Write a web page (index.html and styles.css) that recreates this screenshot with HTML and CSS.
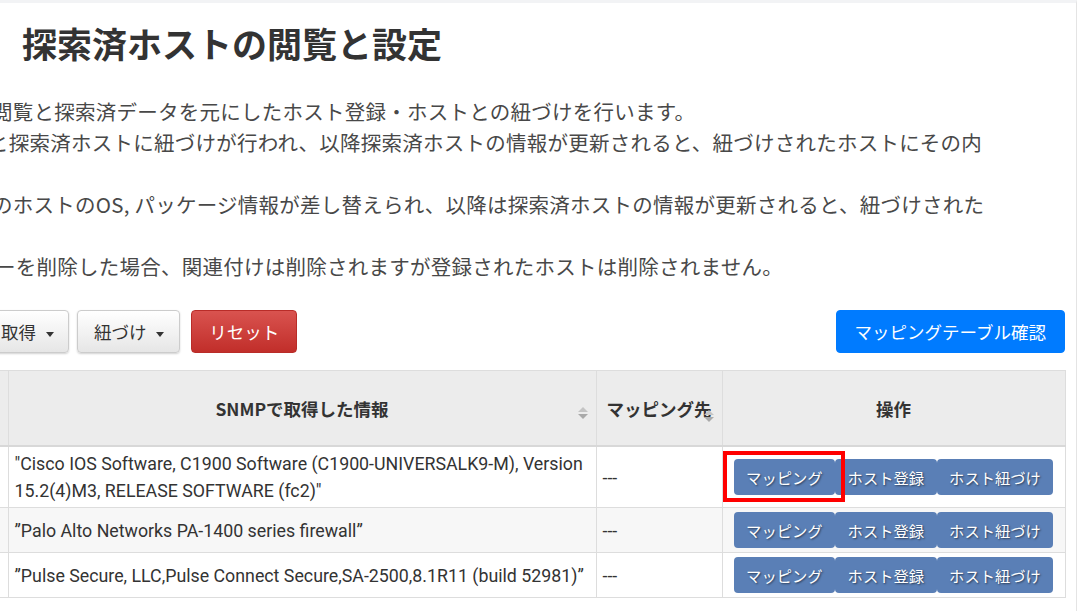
FILE: index.html
```html
<!DOCTYPE html>
<html lang="ja">
<head>
    <meta charset="UTF-8">
    <meta name="viewport" content="width=device-width, initial-scale=1.0">
    <title>探索済ホストの閲覧と設定</title>
    <link rel="stylesheet" href="styles.css">
</head>
<body>
    <div class="page">
        <h1 class="page-title">探索済ホストの閲覧と設定</h1>

        <div class="desc">
            <div class="desc-line shift-8">閲覧と探索済データを元にしたホスト登録・ホストとの紐づけを行います。</div>
            <div class="desc-line shift-12">と探索済ホストに紐づけが行われ、以降探索済ホストの情報が更新されると、紐づけされたホストにその内</div>
            <div class="desc-line"></div>
            <div class="desc-line shift-8">のホストのOS, パッケージ情報が差し替えられ、以降は探索済ホストの情報が更新されると、紐づけされた</div>
            <div class="desc-line"></div>
            <div class="desc-line shift-5">ーを削除した場合、関連付けは削除されますが登録されたホストは削除されません。</div>
        </div>

        <div class="toolbar">
            <button type="button" class="btn btn-default btn-first">取得 <span class="caret"></span></button>
            <button type="button" class="btn btn-default">紐づけ <span class="caret"></span></button>
            <button type="button" class="btn btn-danger">リセット</button>
            <button type="button" class="btn btn-primary">マッピングテーブル確認</button>
        </div>

        <table class="hosts">
            <colgroup>
                <col class="col-hidden">
                <col class="col-info">
                <col class="col-map">
                <col class="col-ops">
            </colgroup>
            <thead>
                <tr>
                    <th class="cell-hidden"></th>
                    <th class="th-center sortable">SNMPで取得した情報<span class="sort-icon"></span></th>
                    <th class="th-left sortable">マッピング先<span class="sort-icon"></span></th>
                    <th class="th-center">操作</th>
                </tr>
            </thead>
            <tbody>
                <tr>
                    <td class="cell-hidden"></td>
                    <td>"Cisco IOS Software, C1900 Software (C1900-UNIVERSALK9-M), Version 15.2(4)M3, RELEASE SOFTWARE (fc2)"</td>
                    <td>---</td>
                    <td class="ops-cell">
                        <div class="ops">
                            <button type="button" class="op-btn">マッピング</button><button type="button" class="op-btn">ホスト登録</button><button type="button" class="op-btn">ホスト紐づけ</button>
                            <span class="highlight"></span>
                        </div>
                    </td>
                </tr>
                <tr>
                    <td class="cell-hidden"></td>
                    <td>”Palo Alto Networks PA-1400 series firewall”</td>
                    <td>---</td>
                    <td class="ops-cell">
                        <div class="ops">
                            <button type="button" class="op-btn">マッピング</button><button type="button" class="op-btn">ホスト登録</button><button type="button" class="op-btn">ホスト紐づけ</button>
                        </div>
                    </td>
                </tr>
                <tr>
                    <td class="cell-hidden"></td>
                    <td>”Pulse Secure, LLC,Pulse Connect Secure,SA-2500,8.1R11 (build 52981)”</td>
                    <td>---</td>
                    <td class="ops-cell">
                        <div class="ops">
                            <button type="button" class="op-btn">マッピング</button><button type="button" class="op-btn">ホスト登録</button><button type="button" class="op-btn">ホスト紐づけ</button>
                        </div>
                    </td>
                </tr>
            </tbody>
        </table>
    </div>
</body>
</html>
```

FILE: styles.css
```css
body {
    margin: 0;
    background: #fff;
    font-family: "Noto Sans CJK JP", "Noto Sans", sans-serif;
    color: #333;
}
.page {
    height: 608px;
    overflow: hidden;
    border-top: 3px solid #f2f3f5;
    border-right: 1px solid #e4e4e4;
    padding-right: 11px;
}
.page-title {
    margin: 19px 0 0 22px;
    font-size: 35px;
    line-height: 42px;
    font-weight: bold;
    color: #333;
}
.desc {
    margin-top: 32px;
    font-size: 20.5px;
    line-height: 31px;
    letter-spacing: 0.25px;
    color: #484848;
    white-space: nowrap;
}
.desc-line {
    height: 31px;
}
.shift-5 { margin-left: -5px; }
.shift-8 { margin-left: -8px; }
.shift-12 { margin-left: -12px; }

.toolbar {
    display: flex;
    align-items: center;
    margin-top: 28px;
}
.btn {
    height: 43px;
    padding: 0 17px;
    border: 1px solid #ccc;
    border-radius: 4px;
    font-family: "Noto Sans CJK JP", sans-serif;
    font-size: 17.5px;
    line-height: 25px;
    cursor: pointer;
}
.btn-default {
    background: linear-gradient(#fff, #e6e6e6);
    color: #333;
    box-shadow: 0 1px 2px rgba(0, 0, 0, 0.18);
    margin-right: 8px;
    padding: 0 15px 0 16px;
}
.btn-first {
    margin-left: -20px;
    padding-left: 20px;
    padding-right: 14px;
}
.btn-default + .btn-danger {
    margin-left: 3px;
}
.btn-danger {
    background: linear-gradient(#d9534f, #c12e2a);
    border-color: #b92c28;
    color: #fff;
}
.btn-primary {
    margin-left: auto;
    background: #007bff;
    border-color: #007bff;
    color: #fff;
    padding: 0 18px;
}
.caret {
    display: inline-block;
    width: 0;
    height: 0;
    margin-left: 6px;
    vertical-align: middle;
    border-top: 5px solid #333;
    border-left: 4.5px solid transparent;
    border-right: 4.5px solid transparent;
}

.hosts {
    margin-top: 17px;
    width: 1065px;
    table-layout: fixed;
    border-collapse: collapse;
    font-family: Roboto, "Noto Sans CJK JP", sans-serif;
    font-size: 17.8px;
    color: #333;
}
.col-hidden { width: 8px; }
.col-info { width: 588px; }
.col-map { width: 126px; }
.col-ops { width: 343px; }
.hosts th,
.hosts td {
    border: 1px solid #ddd;
}
.hosts th {
    height: 74px;
    background: #ececec;
    font-family: "Noto Sans CJK JP", sans-serif;
    font-size: 17.5px;
    font-weight: bold;
    border-bottom: 2px solid #d8d8d8;
    position: relative;
    padding: 0 10px;
}
.th-center { text-align: center; }
.th-left { text-align: left; }
.hosts .cell-hidden {
    border-left: none;
    padding: 0;
}
.hosts td {
    padding: 3px 4px 3px 6px;
    line-height: 27px;
    vertical-align: middle;
}
.hosts tbody tr:nth-child(even) td {
    background: #f7f7f7;
}
.sort-icon {
    position: absolute;
    right: 8px;
    top: 50%;
    width: 10px;
    height: 14px;
    margin-top: -1px;
}
.sort-icon::before,
.sort-icon::after {
    content: "";
    position: absolute;
    left: 0;
    border-left: 5px solid transparent;
    border-right: 5px solid transparent;
}
.sort-icon::before {
    top: 0;
    border-bottom: 5px solid #c4c4c4;
}
.sort-icon::after {
    top: 7px;
    border-top: 5px solid #a9a9a9;
}
.th-left .sort-icon {
    margin-top: 2px;
}

.ops-cell {
    text-align: center;
}
.hosts td.ops-cell {
    padding: 4px 6px;
}
.ops {
    display: inline-flex;
    position: relative;
    vertical-align: middle;
}
.op-btn {
    height: 36px;
    padding: 0 12.5px;
    border: none;
    border-radius: 4px;
    background: #5a7fb6;
    color: #fff;
    font-family: "Noto Sans CJK JP", sans-serif;
    font-size: 15.3px;
    text-shadow: 1px 1px 2px rgba(0, 0, 0, 0.55);
    cursor: pointer;
}
.highlight {
    position: absolute;
    left: -11px;
    top: -8px;
    width: 122px;
    height: 51px;
    border: 4px solid #ff0000;
    box-sizing: border-box;
}
```
